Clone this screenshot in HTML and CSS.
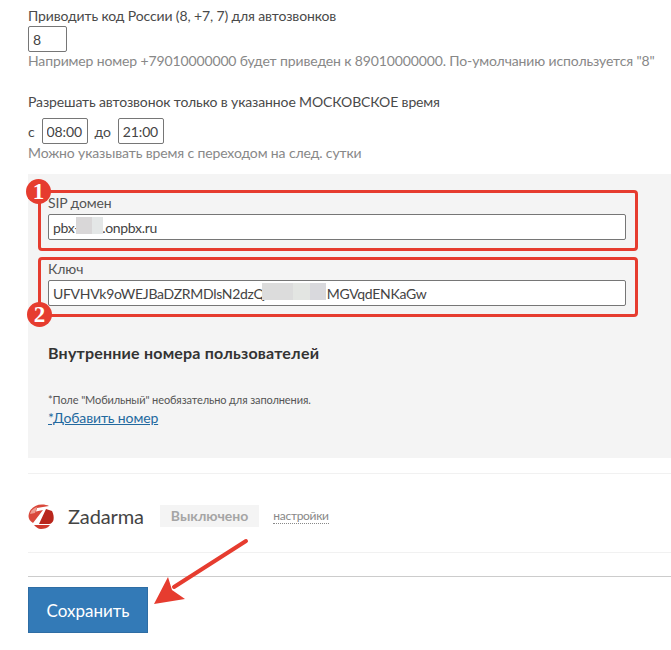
FILE: index.html
```html
<!DOCTYPE html>
<html lang="en">
<head>
    <meta charset="UTF-8">
    <meta name="viewport" content="width=device-width, initial-scale=1.0">
    <title>Настройки автозвонков</title>
    <link rel="stylesheet" href="styles.css">
</head>
<body>

    <div class="field code-field">
        <label>Приводить код России (8, +7, 7) для автозвонков</label>
        <input type="text" class="input-code" value="8">
        <div class="hint">Например номер +79010000000 будет приведен к 89010000000. По-умолчанию используется "8"</div>
    </div>

    <div class="field time-field">
        <label>Разрешать автозвонок только в указанное МОСКОВСКОЕ время</label>
        <div class="time-row">
            <span>с</span>
            <input type="text" class="input-time" value="08:00">
            <span>до</span>
            <input type="text" class="input-time" value="21:00">
        </div>
        <div class="hint">Можно указывать время с переходом на след. сутки</div>
    </div>

    <div class="panel">
        <div class="panel-field sip-field">
            <label>SIP домен</label>
            <input type="text" class="input-wide" value="pbx-       .onpbx.ru">
            <span class="blur blur-sip"></span>
        </div>
        <div class="panel-field key-field">
            <label>Ключ</label>
            <input type="text" class="input-wide" value="UFVHVk9oWEJBaDZRMDlsN2dzQ                   MGVqdENKaGw">
            <span class="blur blur-key"></span>
        </div>

        <h3>Внутренние номера пользователей</h3>
        <div class="note">*Поле "Мобильный" необязательно для заполнения.</div>
        <a href="#" class="add-link">*Добавить номер</a>

        <div class="mark mark-one"></div>
        <div class="mark mark-two"></div>
        <div class="badge badge-one">1</div>
        <div class="badge badge-two">2</div>
    </div>

    <div class="provider">
        <svg class="provider-logo" width="26" height="25" viewBox="0 0 26 25">
            <!-- red ball cut by a white Z -->
            <path d="M0.5 12 C1 5 7 0.5 14 0.5 C17 0.5 19 1 21 2 L9 4 L8 7.5 L15 6 L5 19 C2 17 0.5 15 0.5 12Z" fill="#d9483b"/>
            <path d="M2 10 C3 6 6 4 9 3 L7 9 Z" fill="#ee9d92"/>
            <path d="M18 5 L24 7 C25.5 10 26 13 25.5 16 C25 18 23 20 21 20 L11 20 Z" fill="#b9261c"/>
            <path d="M6 21 H22 C20 24 16 25 13 25 C10 25 8 23 6 21Z" fill="#cf3a2e"/>
        </svg>
        <span class="provider-name">Zadarma</span>
        <span class="status">Выключено</span>
        <a href="#" class="settings-link">настройки</a>
    </div>

    <div class="actions">
        <button>Сохранить</button>
    </div>

    <svg class="arrow" width="110" height="70" viewBox="0 0 110 70">
        <path d="M96 4 L24 50" stroke="#e63c2f" stroke-width="4" stroke-linecap="round" fill="none"/>
        <path d="M4 67 L18 40 L22 53 L35 62 Z" fill="#e63c2f"/>
    </svg>

</body>
</html>
```

FILE: styles.css
```css
body {
    font-family: "Lato", Arial, sans-serif;
    font-size: 14px;
    letter-spacing: -0.13px;
    color: #4a4a4a;
    margin: 0;
    background-color: #fff;
    position: relative;
    height: 650px;
    overflow: hidden;
}

label {
    display: block;
    line-height: 16px;
}

input {
    font-family: inherit;
    font-size: 14px;
    letter-spacing: inherit;
    color: #444;
    box-sizing: border-box;
    border: 1px solid #767676;
    border-radius: 2px;
    background-color: #fff;
    padding: 0 4px;
    margin: 0;
}

.field {
    padding-left: 28px;
}

.code-field {
    padding-top: 8px;
}

.time-field {
    margin-top: 25px;
}

.input-code {
    display: block;
    width: 39px;
    height: 26px;
    margin-top: 2px;
}

.hint {
    color: #888;
    line-height: 16px;
    margin-top: 1px;
}

.time-row {
    display: flex;
    align-items: center;
    gap: 7px;
    margin-top: 8px;
}

.input-time {
    width: 46px;
    height: 26px;
}

.panel {
    position: relative;
    margin: 13px 0 0 28px;
    height: 284px;
    padding: 21px 0 0 20px;
    box-sizing: border-box;
    background-color: #f4f4f4;
}

.panel-field {
    position: relative;
}

.panel-field label {
    color: #555;
    margin-bottom: 3px;
}

.input-wide {
    display: block;
    width: 578px;
    height: 26px;
    letter-spacing: -0.3px;
}

.key-field {
    margin-top: 21px;
}

.blur {
    position: absolute;
    height: 17px;
    bottom: 6px;
}

.blur-sip {
    left: 28px;
    width: 27px;
    background: linear-gradient(90deg, #d9d7d8 60%, #e4e7e7 60%);
}

.blur-key {
    left: 214px;
    width: 64px;
    background: linear-gradient(90deg, #dcdcdc 48%, #e3e5e2 48%, #e3e5e2 75%, #d9d9dd 75%);
}

h3 {
    margin: 37px 0 0;
    font-size: 16px;
    line-height: 20px;
    font-weight: 700;
    letter-spacing: 0.2px;
    color: #333;
}

.note {
    margin-top: 30px;
    font-size: 11px;
    line-height: 14px;
    letter-spacing: -0.1px;
    color: #555;
}

.add-link {
    display: inline-block;
    margin-top: 3px;
    line-height: 16px;
    color: #23699f;
}

.mark {
    position: absolute;
    left: 10px;
    width: 600px;
    box-sizing: border-box;
    border: 3px solid #e63c2f;
    border-radius: 4px;
}

.mark-one {
    top: 16px;
    height: 61px;
}

.mark-two {
    top: 83px;
    height: 60px;
}

.badge {
    position: absolute;
    width: 25px;
    height: 25px;
    line-height: 25px;
    border-radius: 50%;
    background-color: #e63c2f;
    color: #fff;
    text-align: center;
    font-family: "Liberation Serif", serif;
    font-size: 23px;
    font-weight: 700;
}

.badge-one {
    left: -2px;
    top: 5px;
}

.badge-two {
    left: -1px;
    top: 128px;
}

.provider {
    display: flex;
    align-items: center;
    box-sizing: border-box;
    margin: 15px 0 0 28px;
    height: 80px;
    padding-top: 6px;
    border-top: 1px solid #f1f1f1;
    border-bottom: 1px solid #f1f1f1;
}

.provider-logo {
    margin-right: 14px;
}

.provider-name {
    font-size: 20px;
    color: #444;
    margin-right: 16px;
}

.status {
    background-color: #f4f4f4;
    color: #a5a5a5;
    font-weight: 700;
    letter-spacing: 0;
    padding: 2px 11px;
    line-height: 18px;
    margin-right: 14px;
}

.settings-link {
    color: #888;
    font-size: 12px;
    letter-spacing: -0.3px;
    text-decoration: none;
    border-bottom: 1px dotted #888;
}

.actions {
    margin: 23px 0 0 28px;
    padding-top: 10px;
    border-top: 1px solid #ccc;
}

button {
    font-family: inherit;
    width: 120px;
    height: 46px;
    font-size: 17px;
    color: #fff;
    background-color: #337ab7;
    border: 1px solid #2e6da4;
    cursor: pointer;
}

.arrow {
    position: absolute;
    left: 150px;
    top: 537px;
}
```
